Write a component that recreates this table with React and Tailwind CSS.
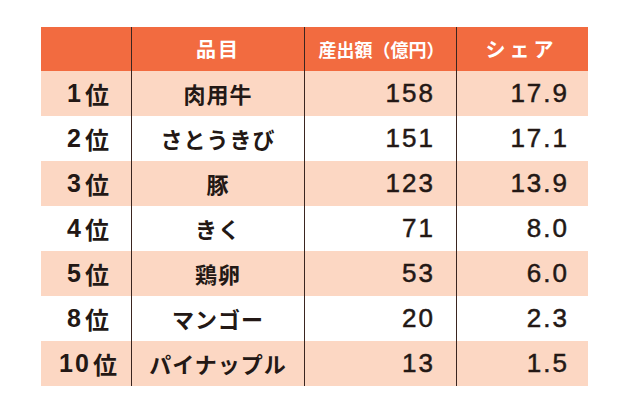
import React from "react";

const rows = [
  { rank: "1", item: "肉用牛", value: "158", share: "17.9" },
  { rank: "2", item: "さとうきび", value: "151", share: "17.1" },
  { rank: "3", item: "豚", value: "123", share: "13.9" },
  { rank: "4", item: "きく", value: "71", share: "8.0" },
  { rank: "5", item: "鶏卵", value: "53", share: "6.0" },
  { rank: "8", item: "マンゴー", value: "20", share: "2.3" },
  { rank: "10", item: "パイナップル", value: "13", share: "1.5" },
];

const jp = { fontFamily: '"Noto Sans CJK JP", "Noto Sans", sans-serif' };
const num = { fontFamily: '"Liberation Sans", Arial, sans-serif' };

const App = () => {
  return (
    <div className="w-[630px] h-[416px] bg-white pt-[27px] pl-[41px]">
      <div className="w-[547px] text-[#231815]" style={jp}>
        {/* Header */}
        <div className="grid grid-cols-[90px_173px_152px_132px] h-[44px] bg-[#f26b40] text-white font-bold">
          <div />
          <div className="border-l border-[#3a2520] flex items-center justify-center text-[20px] tracking-[2px]">
            品目
          </div>
          <div className="border-l border-[#3a2520] flex items-center justify-center text-[18px] pl-[2px]">
            産出額（億円）
          </div>
          <div className="border-l border-[#3a2520] flex items-center justify-center text-[20px] tracking-[4px] pr-[2px]">
            シェア
          </div>
        </div>

        {/* Rows */}
        {rows.map((r, i) => (
          <div
            key={r.rank}
            className={`grid grid-cols-[90px_173px_152px_132px] h-[45px] ${
              i % 2 === 0 ? "bg-[#fcd7c3]" : "bg-white"
            }`}
          >
            <div className="flex items-center justify-center font-bold pl-[4px]">
              <span className="text-[25px] tracking-[2px] mr-[2px]" style={num}>
                {r.rank}
              </span>
              <span className="text-[24px]">位</span>
            </div>
            <div className="border-l border-[#3a2520] flex items-center justify-center text-[22px] font-bold tracking-[1px]">
              {r.item}
            </div>
            <div
              className="border-l border-[#3a2520] flex items-center justify-end pr-[21px] text-[26px] tracking-[2px] [-webkit-text-stroke:0.5px_#231815]"
              style={num}
            >
              {r.value}
            </div>
            <div
              className="border-l border-[#3a2520] flex items-center justify-end pr-[19px] text-[26px] tracking-[2px] [-webkit-text-stroke:0.5px_#231815]"
              style={num}
            >
              {r.share}
            </div>
          </div>
        ))}
      </div>
    </div>
  );
};

export default App;
